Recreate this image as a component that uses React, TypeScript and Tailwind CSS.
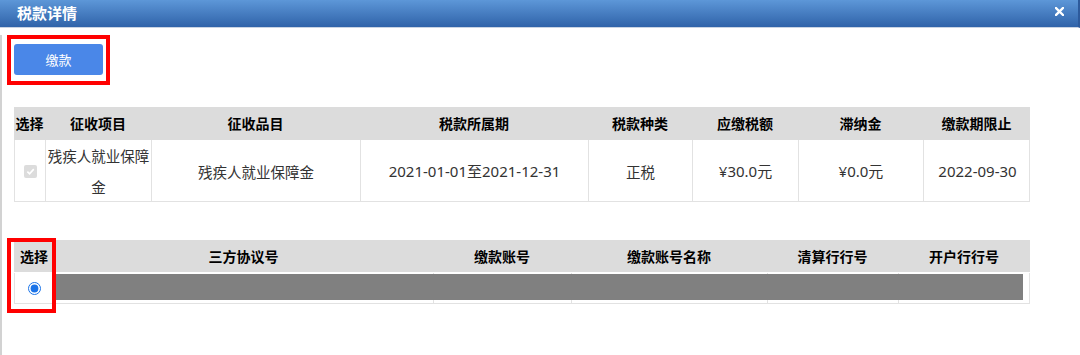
import React from "react";

const font = { fontFamily: '"Noto Sans CJK SC", "Noto Sans", sans-serif' };
const numFont = { fontFamily: '"Noto Sans", "Noto Sans CJK SC", sans-serif' };

const taxCols = "grid-cols-[31px_106px_209px_228px_104px_106px_125px_107px]";
const bankCols = "grid-cols-[40px_379px_138px_196px_131px_132px]";

const taxHeaders = ["选择", "征收项目", "征收品目", "税款所属期", "税款种类", "应缴税额", "滞纳金", "缴款期限止"];
const bankHeaders = ["选择", "三方协议号", "缴款账号", "缴款账号名称", "清算行行号", "开户行行号"];

function DisabledCheck() {
  return (
    <span className="flex h-[13px] w-[13px] items-center justify-center rounded-[2px] bg-[#dcdcdc]">
      <svg width="9" height="9" viewBox="0 0 10 10">
        <path d="M1.5 5.2 L4 7.6 L8.6 2.4" fill="none" stroke="#fff" strokeWidth="1.8" />
      </svg>
    </span>
  );
}

export default function App() {
  // [text, numeric?]
  const row: [string, boolean][] = [
    ["残疾人就业保障金", false],
    ["残疾人就业保障金", false],
    ["2021-01-01至2021-12-31", true],
    ["正税", false],
    ["¥30.0元", true],
    ["¥0.0元", true],
    ["2022-09-30", true],
  ];

  return (
    <div className="relative h-[355px] w-[1080px] overflow-hidden bg-white" style={font}>
      {/* title bar */}
      <div className="flex h-[28px] items-center justify-between border-b border-[#c9d3e3] border-r-2 border-r-[#2d5a9c] bg-gradient-to-b from-[#5d97d8] to-[#3063a9] pl-[17px] pr-[14px]">
        <span className="text-[15px] font-bold text-white">税款详情</span>
        <svg width="9" height="9" viewBox="0 0 9 9" className="mb-[4px]">
          <path d="M1 1 L8 8 M8 1 L1 8" stroke="#fff" strokeWidth="2.4" strokeLinecap="square" />
        </svg>
      </div>

      <div className="h-[327px] border-l-2 border-[#d2d2d2] pl-[12px]">
        {/* pay button, marked */}
        <div className="ml-[-7px] mt-[7px] w-[103px] border-4 border-[#ff0000] pb-[6px] pl-[3px] pr-[3px] pt-[5px]">
          <button className="h-[31px] w-[89px] rounded-[3px] bg-[#4a87e8] text-[13px] text-white">缴款</button>
        </div>

        {/* tax table */}
        <div className="mt-[22px] w-[1016px]">
          <div className={`grid ${taxCols} h-[33px] bg-[#dcdcdc] text-[14px] font-bold text-black`}>
            {taxHeaders.map((h) => (
              <div key={h} className="flex items-center justify-center whitespace-nowrap">{h}</div>
            ))}
          </div>
          <div className={`grid ${taxCols} h-[62px] border border-t-0 border-[#e2e2e2] text-[14.5px] leading-[31px] text-[#333]`}>
            <div className="flex items-center justify-center border-r border-[#e2e2e2]">
              <DisabledCheck />
            </div>
            {row.map(([c, num], i) => (
              <div
                key={i}
                className={`flex items-center justify-center text-center ${num ? "text-[15px]" : ""} ${i < row.length - 1 ? "border-r border-[#e2e2e2]" : ""}`}
                style={num ? numFont : undefined}
              >
                {c}
              </div>
            ))}
          </div>
        </div>

        {/* bank account table */}
        <div className="relative mt-[38px] w-[1016px]">
          <div className={`grid ${bankCols} h-[33px] border-b border-white bg-[#dcdcdc] text-[14px] font-bold text-black`}>
            {bankHeaders.map((h) => (
              <div key={h} className="flex items-center justify-center whitespace-nowrap">{h}</div>
            ))}
          </div>
          <div className={`relative grid ${bankCols} h-[31px] border border-t-0 border-[#e2e2e2]`}>
            <div className="flex items-center justify-center border-r border-[#e2e2e2]">
              <input type="radio" defaultChecked className="m-0 h-[13px] w-[13px] accent-[#1a73e8]" />
            </div>
            {bankHeaders.slice(1).map((h, i) => (
              <div key={h} className={i < bankHeaders.length - 2 ? "border-r border-[#e2e2e2]" : ""} />
            ))}
            <div className="absolute bottom-[3px] left-[40px] right-[6px] top-[1px] bg-[#808080]" />
          </div>
          {/* red mark around the select column */}
          <div className="absolute left-[-7px] top-[-2px] h-[75px] w-[49px] border-4 border-[#ff0000]" />
        </div>
      </div>
    </div>
  );
}
